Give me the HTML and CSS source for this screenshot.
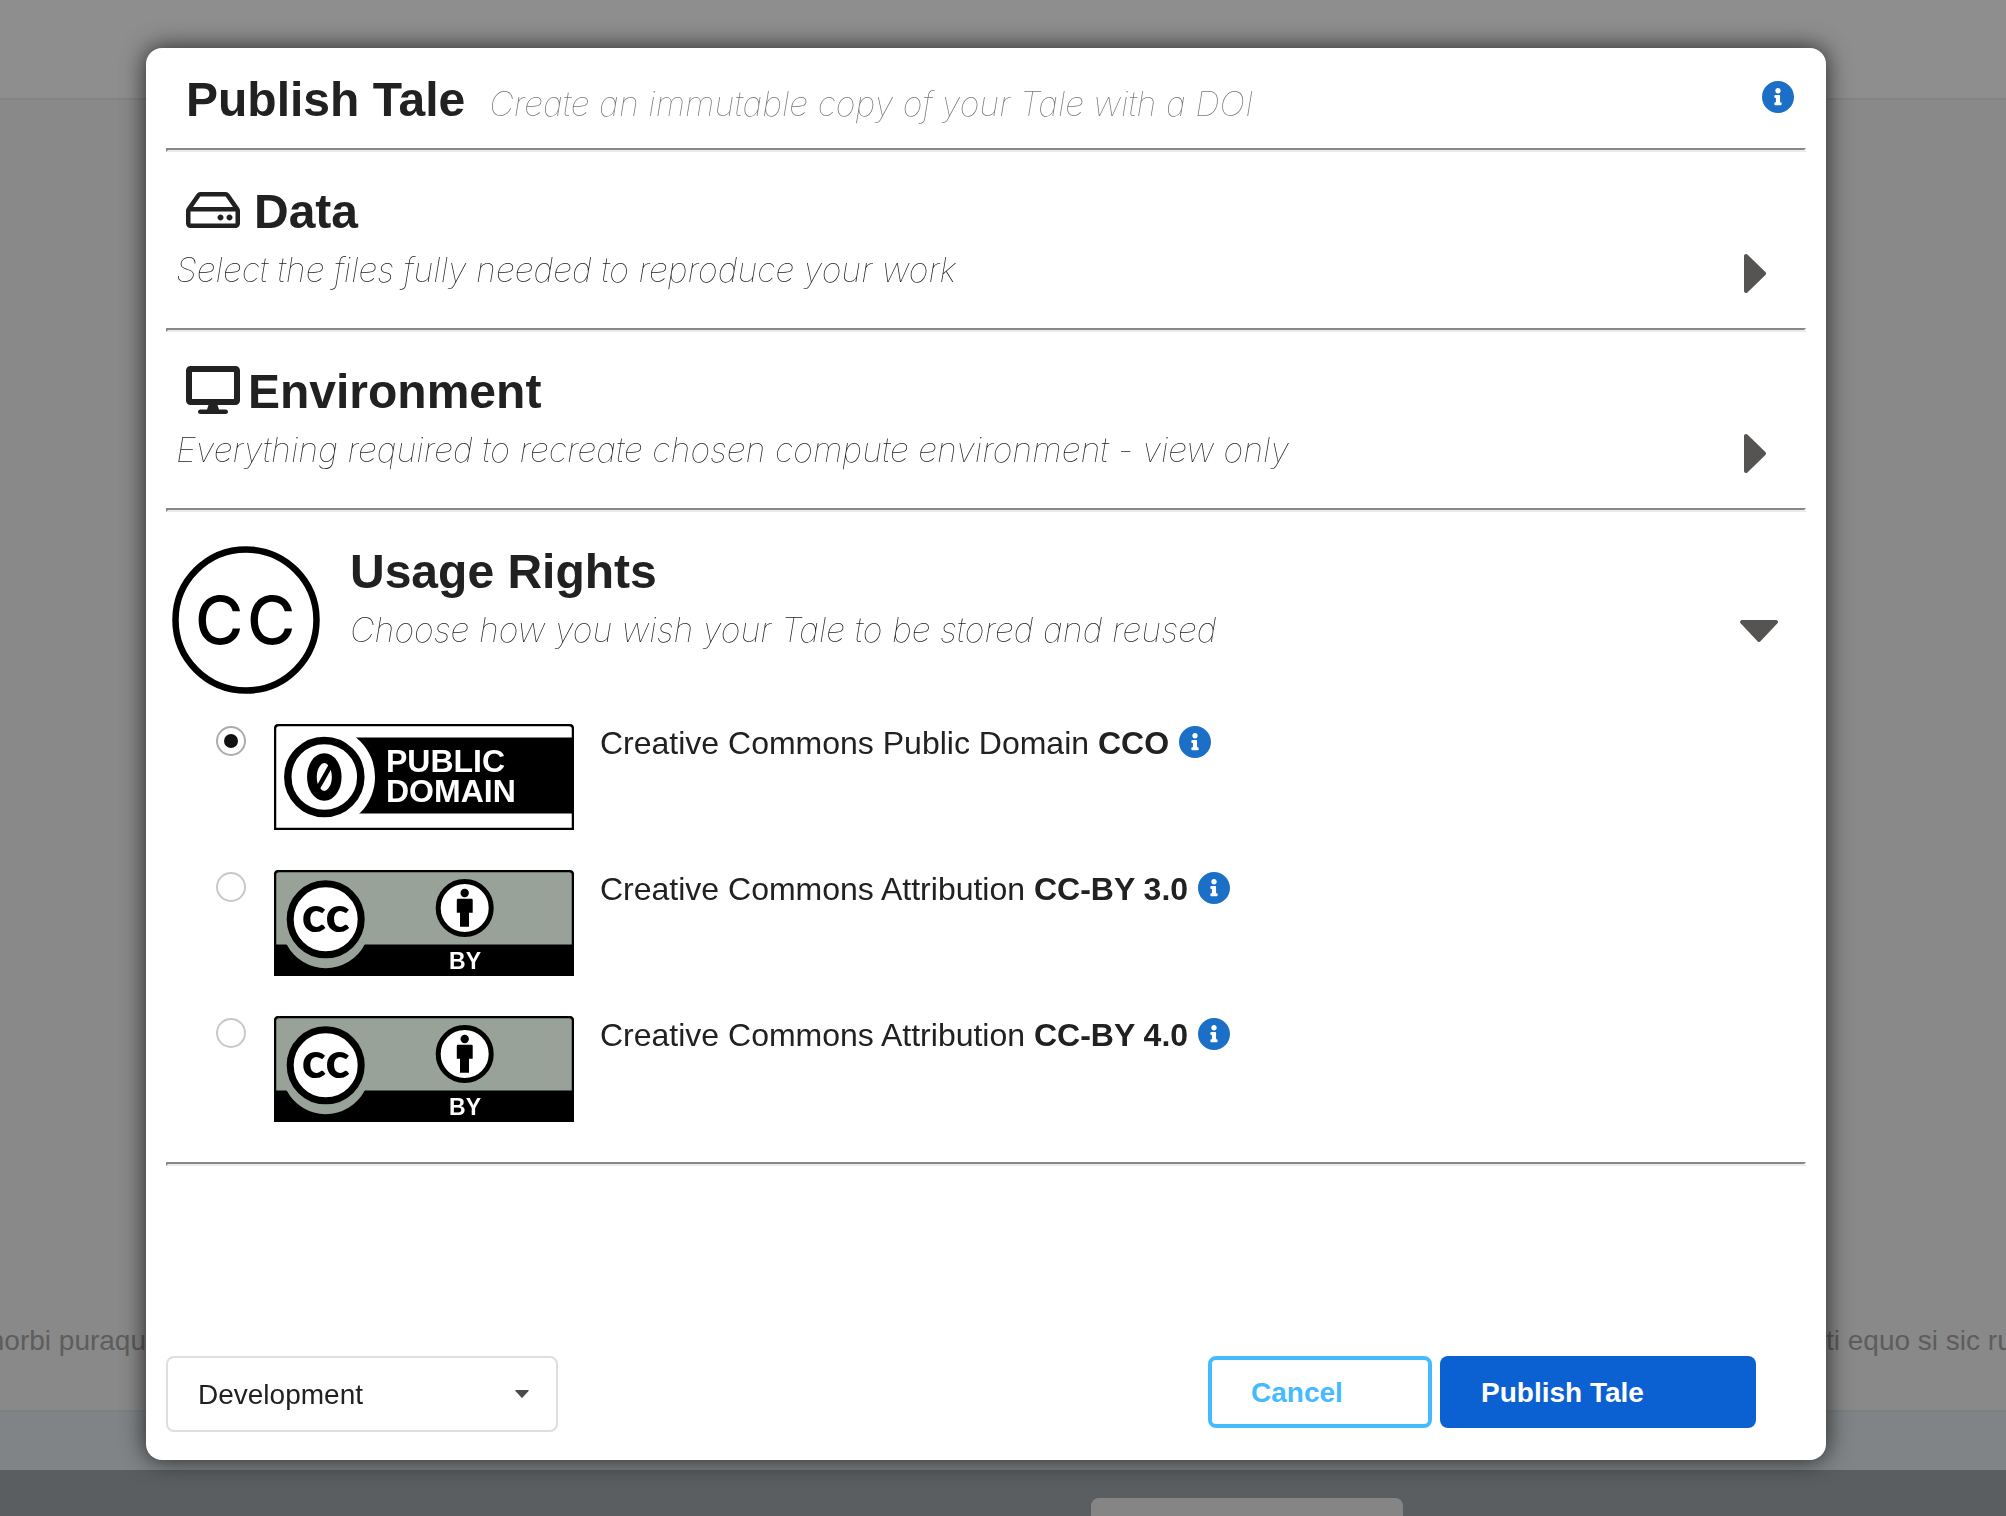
FILE: index.html
```
<!DOCTYPE html>
<html lang="en">
<head>
<meta charset="utf-8">
<meta name="viewport" content="width=device-width, initial-scale=1">
<title>Publish Tale</title>
<link rel="stylesheet" href="styles.css">
</head>
<body>
<svg class="defs" width="0" height="0" aria-hidden="true">
  <symbol id="icon-info" viewBox="8 8 496 496"><path d="M256 8C119.043 8 8 119.083 8 256c0 136.997 111.043 248 248 248s248-111.003 248-248C504 119.083 392.957 8 256 8zm0 110c23.196 0 42 18.804 42 42s-18.804 42-42 42-42-18.804-42-42 18.804-42 42-42zm56 254c0 6.627-5.373 12-12 12h-88c-6.627 0-12-5.373-12-12v-24c0-6.627 5.373-12 12-12h12v-64h-12c-6.627 0-12-5.373-12-12v-24c0-6.627 5.373-12 12-12h64c6.627 0 12 5.373 12 12v100h12c6.627 0 12 5.373 12 12v24z"/></symbol>
</svg>

<div class="page" aria-hidden="true">
  <div class="page-header"></div>
  <div class="page-main">
    <span class="snippet snippet-left">morbi puraqu</span>
    <span class="snippet snippet-right">ti equo si sic rutrum</span>
  </div>
  <div class="page-strip"></div>
  <div class="page-footer"><div class="page-footer-box"></div></div>
</div>

<div class="overlay">
  <form class="modal" role="dialog" aria-labelledby="modal-title">
    <header class="modal-header">
      <div class="modal-titles">
        <h1 class="title" id="modal-title">Publish Tale</h1>
        <p class="subtitle subtitle-muted">Create an immutable copy of your Tale with a DOI</p>
      </div>
      <button type="button" class="info" aria-label="About publishing"><svg><use href="#icon-info"/></svg></button>
    </header>
    <hr class="rule">

    <section class="section">
      <h2 class="title section-title section-title-data">
        <svg class="section-icon" viewBox="0 0 576 512" aria-hidden="true"><path d="M567.403 235.642L462.323 84.589A48 48 0 0 0 422.919 64H153.081a48 48 0 0 0-39.404 20.589L8.597 235.642A48.001 48.001 0 0 0 0 263.054V400c0 26.51 21.49 48 48 48h480c26.51 0 48-21.49 48-48V263.054c0-9.801-3-19.366-8.597-27.412zM153.081 112h269.838l77.913 112H75.168l77.913-112zM528 400H48V272h480v128zm-32-64c0 17.673-14.327 32-32 32s-32-14.327-32-32 14.327-32 32-32 32 14.327 32 32zm-96 0c0 17.673-14.327 32-32 32s-32-14.327-32-32 14.327-32 32-32 32 14.327 32 32z"/></svg>
        Data
      </h2>
      <p class="subtitle">Select the files fully needed to reproduce your work</p>
      <button type="button" class="caret" aria-label="Expand Data" aria-expanded="false"><svg viewBox="0 0 44 44"><path d="M8 7v35l18-17.500z"/></svg></button>
    </section>
    <hr class="rule">

    <section class="section">
      <h2 class="title section-title">
        <svg class="section-icon" viewBox="0 0 576 512" aria-hidden="true"><path d="M528 0H48C21.500 0 0 21.500 0 48v320c0 26.500 21.500 48 48 48h192l-16 48h-72c-13.300 0-24 10.700-24 24s10.700 24 24 24h272c13.300 0 24-10.700 24-24s-10.700-24-24-24h-72l-16-48h192c26.500 0 48-21.500 48-48V48c0-26.500-21.500-48-48-48zm-16 352H64V64h448v288z"/></svg>
        Environment
      </h2>
      <p class="subtitle">Everything required to recreate chosen compute environment - view only</p>
      <button type="button" class="caret" aria-label="Expand Environment" aria-expanded="false"><svg viewBox="0 0 44 44"><path d="M8 7v35l18-17.500z"/></svg></button>
    </section>
    <hr class="rule">

    <section class="section section-rights">
      <svg class="cc-logo" viewBox="0 0 148 148" aria-hidden="true">
        <circle cx="74" cy="74" r="70.500" fill="none" stroke="#000" stroke-width="6.500"/>
        <text x="23 75" y="98" class="cc-logo-text">CC</text>
      </svg>
      <h2 class="title">Usage Rights</h2>
      <p class="subtitle">Choose how you wish your Tale to be stored and reused</p>
      <button type="button" class="caret" aria-label="Collapse Usage Rights" aria-expanded="true"><svg viewBox="0 0 44 44"><path d="M4 13h34L21 31z"/></svg></button>
    </section>

    <ul class="licenses">
      <li class="license">
        <input class="radio" type="radio" name="license" id="license-cc0" checked>
        <label class="license-label" for="license-cc0">
          <svg class="badge" viewBox="0 0 300 106" aria-hidden="true">
            <path d="M82 13.500h217v76H82z"/>
            <circle cx="50.300" cy="53" r="50.700" fill="#fff"/>
            <path d="M1 105V5q0-4 4-4h290q4 0 4 4v100z" fill="none" stroke="#000" stroke-width="2.500"/>
            <circle cx="50.300" cy="53" r="36.500" fill="#fff" stroke="#000" stroke-width="7.500"/>
            <ellipse cx="50.300" cy="53" rx="12.400" ry="18.800" fill="none" stroke="#000" stroke-width="9.700"/>
            <path d="M44 64l13-23" stroke="#000" stroke-width="4.500"/>
            <text class="badge-text badge-text-large" x="112" y="48">PUBLIC</text>
            <text class="badge-text badge-text-large" x="112" y="78">DOMAIN</text>
          </svg>
          <span>Creative Commons Public Domain <strong>CCO</strong></span>
        </label>
        <button type="button" class="info" aria-label="About CC0"><svg><use href="#icon-info"/></svg></button>
      </li>
      <li class="license">
        <input class="radio" type="radio" name="license" id="license-by3">
        <label class="license-label" for="license-by3">
          <svg class="badge" viewBox="0 0 300 106" aria-hidden="true">
            <path d="M1 105V5q0-4 4-4h290q4 0 4 4v100z" fill="#99a299" stroke="#000" stroke-width="2.500"/>
            <path d="M0 74.500h300V106H0z"/>
            <path d="M12.700 74.500a44 44 0 0 0 78 0V60h-78z" fill="#99a299"/>
            <circle cx="51.700" cy="49.300" r="35.500" fill="#fff" stroke="#000" stroke-width="7"/>
            <text class="badge-cc" x="51.700" y="62">cc</text>
            <circle cx="190.700" cy="38" r="26.500" fill="#fff" stroke="#000" stroke-width="5"/>
            <circle cx="190.700" cy="23" r="4.200"/>
            <path d="M184 28.700h13.500q1.200 0 1.200 1.200v12.800h-3.700v14h-9v-14h-3.200V29.900q0-1.200 1.200-1.200z"/>
            <text class="badge-text badge-text-small" x="191" y="99">BY</text>
          </svg>
          <span>Creative Commons Attribution <strong>CC-BY 3.0</strong></span>
        </label>
        <button type="button" class="info" aria-label="About CC-BY 3.0"><svg><use href="#icon-info"/></svg></button>
      </li>
      <li class="license">
        <input class="radio" type="radio" name="license" id="license-by4">
        <label class="license-label" for="license-by4">
          <svg class="badge" viewBox="0 0 300 106" aria-hidden="true">
            <path d="M1 105V5q0-4 4-4h290q4 0 4 4v100z" fill="#99a299" stroke="#000" stroke-width="2.500"/>
            <path d="M0 74.500h300V106H0z"/>
            <path d="M12.700 74.500a44 44 0 0 0 78 0V60h-78z" fill="#99a299"/>
            <circle cx="51.700" cy="49.300" r="35.500" fill="#fff" stroke="#000" stroke-width="7"/>
            <text class="badge-cc" x="51.700" y="62">cc</text>
            <circle cx="190.700" cy="38" r="26.500" fill="#fff" stroke="#000" stroke-width="5"/>
            <circle cx="190.700" cy="23" r="4.200"/>
            <path d="M184 28.700h13.500q1.200 0 1.200 1.200v12.800h-3.700v14h-9v-14h-3.200V29.900q0-1.200 1.200-1.200z"/>
            <text class="badge-text badge-text-small" x="191" y="99">BY</text>
          </svg>
          <span>Creative Commons Attribution <strong>CC-BY 4.0</strong></span>
        </label>
        <button type="button" class="info" aria-label="About CC-BY 4.0"><svg><use href="#icon-info"/></svg></button>
      </li>
    </ul>
    <hr class="rule">

    <footer class="modal-footer">
      <div class="dropdown">
        <select class="select" aria-label="Repository">
          <option>Development</option>
        </select>
        <svg class="select-arrow" viewBox="0 0 14 8" aria-hidden="true"><path d="M1 0h12q1 0 .6 1L7.600 7.600q-.6.600-1.200 0L.4 1Q0 0 1 0z"/></svg>
      </div>
      <div class="actions">
        <button type="button" class="button button-cancel">Cancel</button>
        <button type="submit" class="button button-primary">Publish Tale</button>
      </div>
    </footer>
  </form>
</div>
</body>
</html>
```
FILE: styles.css
```
* {
  box-sizing: border-box;
}

body {
  margin: 0;
  overflow: hidden;
  background: #898989;
  color: #212121;
  font-family: "Liberation Sans", Arial, sans-serif;
  font-size: 28px;
}

h1, h2, p, ul {
  margin: 0;
  padding: 0;
}

button {
  margin: 0;
  padding: 0;
  border: 0;
  background: none;
  font: inherit;
  cursor: pointer;
}

svg {
  display: block;
}

.defs {
  position: absolute;
}

/* Dimmed page behind the dialog */
.page {
  display: flex;
  flex-direction: column;
  height: 100vh;
  overflow: hidden;
}

.page-header {
  height: 100px;
  border-bottom: 2px solid #838383;
  background: #8e8e8e;
}

.page-main {
  flex: 1;
  display: flex;
  align-items: flex-end;
  justify-content: space-between;
  padding-bottom: 49px;
  color: #5d5d5d;
  line-height: 40px;
  white-space: nowrap;
}

.snippet {
  display: flex;
  overflow: hidden;
}

.snippet-left {
  width: 146px;
  justify-content: flex-end;
}

.snippet-right {
  width: 180px;
}

.page-strip {
  height: 60px;
  border-top: 2px solid #7b8281;
  background: #808486;
}

.page-footer {
  height: 46px;
  padding-top: 28px;
  overflow: hidden;
  background: #5a5e60;
}

.page-footer-box {
  width: 312px;
  height: 60px;
  margin-left: 54.4%;
  border-radius: 8px;
  background: #858585;
}

/* Dialog */
.overlay {
  position: fixed;
  inset: 0;
  padding: 48px 180px 56px 146px;
}

.modal {
  display: flex;
  flex-direction: column;
  min-height: 100%;
  padding: 0 20px 28px;
  border-radius: 16px;
  background: #fff;
  box-shadow: 0 0 24px rgba(0, 0, 0, 0.75);
}

.modal-header {
  display: flex;
  align-items: flex-start;
  justify-content: space-between;
  padding: 24px 12px 20px 20px;
}

.modal-header .info {
  margin-top: 9px;
}

.modal-titles {
  display: flex;
  align-items: baseline;
  gap: 24px;
}

.title {
  font-size: 48px;
  font-weight: 700;
  line-height: 56px;
}

.subtitle {
  font-family: Inter, "Liberation Sans", sans-serif;
  font-size: 34px;
  font-style: italic;
  font-weight: 100;
  line-height: 42px;
}

.subtitle-muted {
  color: #777;
}

.rule {
  width: 100%;
  margin: 0;
  border: 2px solid;
  border-color: #888 #ebebeb #ebebeb #888;
}

.info {
  flex: none;
  width: 32px;
  height: 32px;
  border-radius: 50%;
  color: #1c6fc6;
}

.info svg {
  width: 100%;
  height: 100%;
  fill: currentColor;
}

.section {
  display: grid;
  grid-template-columns: 1fr auto;
  grid-template-rows: 58px 1fr;
  row-gap: 8px;
  align-items: start;
  padding: 31px 24px 35px 10px;
}

.section-title {
  grid-column: 1 / -1;
  display: flex;
  align-items: center;
  gap: 8px;
  padding-left: 10px;
}

.section-title-data {
  gap: 14px;
}

.section .title {
  line-height: 58px;
}

.section-icon {
  width: 54px;
  height: 48px;
  margin-bottom: 4px;
  fill: currentColor;
}

.caret {
  width: 44px;
  height: 44px;
}

.caret svg {
  width: 100%;
  height: 100%;
  fill: #555453;
  stroke: #555453;
  stroke-width: 4px;
  stroke-linejoin: round;
}

.section-rights {
  grid-template-columns: auto 1fr auto;
  column-gap: 30px;
  padding: 31px 24px 30px 6px;
}

.section-rights .title {
  grid-column: 2 / -1;
}

.cc-logo {
  grid-row: 1 / 3;
  width: 148px;
  height: 148px;
  margin-top: 3px;
}

.cc-logo-text {
  font-family: Inter, sans-serif;
  font-size: 66px;
  font-weight: 500;
  fill: #000;
}

/* Licence choices */
.licenses {
  display: flex;
  flex-direction: column;
  gap: 40px;
  padding: 0 0 40px 50px;
  list-style: none;
}

.license {
  display: flex;
  align-items: flex-start;
}

.radio {
  appearance: none;
  flex: none;
  display: grid;
  place-items: center;
  width: 30px;
  height: 30px;
  margin: 2px 28px 0 0;
  border: 2px solid #c8c8c8;
  border-radius: 50%;
  background: #fff;
}

.radio:checked {
  border-color: #acacac;
}

.radio:checked::before {
  content: "";
  width: 14px;
  height: 14px;
  border-radius: 50%;
  background: #111;
}

.license-label {
  display: flex;
  gap: 26px;
  margin-right: 10px;
  font-size: 32px;
  line-height: 38px;
}

.license .info {
  margin-top: 2px;
}

.badge {
  flex: none;
  width: 300px;
  height: 106px;
}

.badge-text {
  font-weight: 700;
  fill: #fff;
}

.badge-text-large {
  font-size: 32px;
}

.badge-text-small {
  font-size: 23px;
  text-anchor: middle;
}

.badge-cc {
  font-family: Lato, sans-serif;
  font-size: 50px;
  font-weight: 900;
  text-anchor: middle;
}

/* Footer */
.modal-footer {
  display: flex;
  align-items: flex-start;
  justify-content: space-between;
  margin-top: auto;
  padding-right: 50px;
}

.dropdown {
  display: grid;
  align-items: center;
  width: 392px;
}

.select {
  grid-area: 1 / 1;
  appearance: none;
  height: 76px;
  padding: 0 60px 0 30px;
  border: 2px solid #dddede;
  border-radius: 8px;
  background: #fff;
  color: inherit;
  font: inherit;
}

.select-arrow {
  grid-area: 1 / 1;
  justify-self: end;
  width: 14px;
  height: 8px;
  margin-right: 29px;
  fill: #4a4a4a;
  pointer-events: none;
}

.actions {
  display: flex;
  gap: 8px;
}

.button {
  height: 72px;
  padding: 2px 0 0 41px;
  border-radius: 8px;
  font-weight: 700;
  text-align: left;
}

.button-cancel {
  width: 224px;
  padding-left: 39px;
  border: 4px solid #46baff;
  background: #fff;
  color: #46baff;
}

.button-primary {
  width: 316px;
  background: #0b61d1;
  color: #fff;
}
```
